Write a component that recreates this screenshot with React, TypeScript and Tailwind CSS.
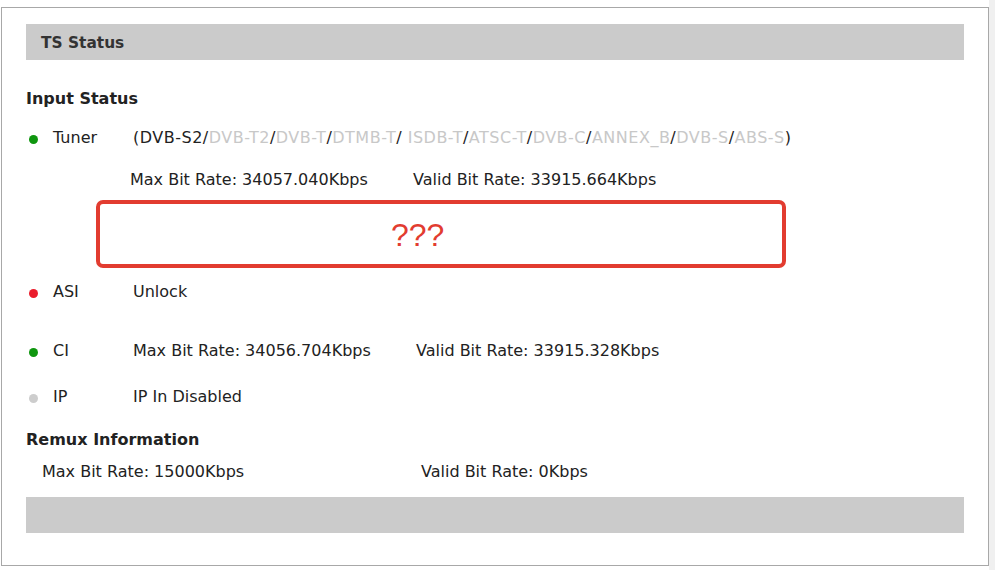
import React from "react";

const font = { fontFamily: '"DejaVu Sans", Verdana, sans-serif' };

function Dot({ color }: { color: string }) {
  return <span className={`inline-block w-[9px] h-[9px] rounded-full ${color}`} />;
}

const modes: { t: string; on: boolean }[] = [
  { t: "DVB-S2", on: true },
  { t: "DVB-T2", on: false },
  { t: "DVB-T", on: false },
  { t: "DTMB-T", on: false },
  { t: " ISDB-T", on: false },
  { t: "ATSC-T", on: false },
  { t: "DVB-C", on: false },
  { t: "ANNEX_B", on: false },
  { t: "DVB-S", on: false },
  { t: "ABS-S", on: false },
];

export default function App() {
  return (
    <div className="flex w-[995px] h-[570px] bg-white" style={font}>
      <div className="w-[989px] h-[570px] bg-white">
        <div className="ml-[1px] mt-[7px] w-[988px] h-[559px] border border-[#a8a8a8] px-[24px] pt-[16px] text-[16px] text-[#222]">
          <div className="h-[36px] bg-[#cbcbcb] flex items-center pl-[15px] pt-[4px] font-bold text-[#333] text-[15.4px]">
            TS Status
          </div>
          <div className="mt-[20px] h-[36px] pt-[2px] flex items-center font-bold text-[#222]">Input Status</div>

          {/* Tuner */}
          <div className="h-[42px] pt-[2px] flex items-center">
            <div className="w-[27px] pl-[3px] pt-[2px] flex items-center"><Dot color="bg-[#0f960f]" /></div>
            <div className="w-[80px]">Tuner</div>
            <div className="tracking-[0.5px]">
              (
              {modes.map((m, i) => (
                <React.Fragment key={i}>
                  <span className={m.on ? "text-[#222]" : "text-[#c8c8c8]"}>{m.t}</span>
                  {i < modes.length - 1 ? "/" : ""}
                </React.Fragment>
              ))}
              )
            </div>
          </div>
          <div className="h-[42px] pt-[2px] flex items-center pl-[104px]">
            <div className="w-[283px]">Max Bit Rate: 34057.040Kbps</div>
            <div>Valid Bit Rate: 33915.664Kbps</div>
          </div>

          {/* annotation box */}
          <div className="ml-[70px] w-[690px] h-[68px] border-[4px] border-[#e23c30] rounded-[7px] flex items-center pl-[291px] pt-[2px]">
            <span className="text-[#e23c30] text-[32px]" style={{ fontFamily: '"Liberation Sans", Arial, sans-serif' }}>???</span>
          </div>

          {/* ASI */}
          <div className="h-[46px] pt-[2px] flex items-center">
            <div className="w-[27px] pl-[3px] pt-[2px] flex items-center"><Dot color="bg-[#ea1d2c]" /></div>
            <div className="w-[80px]">ASI</div>
            <div>Unlock</div>
          </div>

          {/* CI */}
          <div className="mt-[16px] h-[40px] pt-[2px] flex items-center">
            <div className="w-[27px] pl-[3px] pt-[2px] flex items-center"><Dot color="bg-[#0f960f]" /></div>
            <div className="w-[80px]">CI</div>
            <div className="w-[283px]">Max Bit Rate: 34056.704Kbps</div>
            <div>Valid Bit Rate: 33915.328Kbps</div>
          </div>

          {/* IP */}
          <div className="mt-[6px] h-[40px] pt-[2px] flex items-center">
            <div className="w-[27px] pl-[3px] pt-[2px] flex items-center"><Dot color="bg-[#cdcdcd]" /></div>
            <div className="w-[80px]">IP</div>
            <div>IP In Disabled</div>
          </div>

          <div className="mt-[5px] h-[36px] pt-[2px] flex items-center font-bold">Remux Information</div>
          <div className="h-[28px] pt-[2px] flex items-center pl-[16px]">
            <div className="w-[379px]">Max Bit Rate: 15000Kbps</div>
            <div>Valid Bit Rate: 0Kbps</div>
          </div>

          <div className="mt-[12px] h-[36px] bg-[#cbcbcb]" />
        </div>
      </div>
      <div className="flex-1 h-[570px] bg-[#f0f0f0]" />
    </div>
  );
}
